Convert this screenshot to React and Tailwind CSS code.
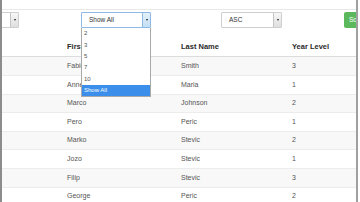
import React from 'react';

const rows = [
  { first: 'Fabio', last: 'Smith', year: 3 },
  { first: 'Anne', last: 'Maria', year: 1 },
  { first: 'Marco', last: 'Johnson', year: 2 },
  { first: 'Pero', last: 'Peric', year: 1 },
  { first: 'Marko', last: 'Stevic', year: 2 },
  { first: 'Jozo', last: 'Stevic', year: 1 },
  { first: 'Filip', last: 'Stevic', year: 3 },
  { first: 'George', last: 'Peric', year: 2 },
];

const options = ['2', '3', '5', '7', '10', 'Show All'];

const Arrow = ({ focused }) => (
  <div
    className={`w-[8px] h-full flex items-center justify-center border-l ${
      focused
        ? 'border-[#8db9e6] bg-gradient-to-b from-[#e4f1fb] to-[#c4dff4]'
        : 'border-[#c4c4c4] bg-gradient-to-b from-[#f7f7f7] to-[#dedede]'
    }`}
  >
    <div className="w-0 h-0 border-l-[1.5px] border-r-[1.5px] border-t-[2px] border-l-transparent border-r-transparent border-t-[#222]" />
  </div>
);

const Select = ({ label, width, focused, className = '' }) => (
  <div
    className={`h-[16px] flex items-stretch bg-white rounded-[1px] border ${
      focused ? 'border-[#8db9e6]' : 'border-[#cfcfcf]'
    } ${width} ${className}`}
  >
    <div className="flex-1 flex items-center pl-[7px] text-[6.5px] text-[#333]">{label}</div>
    <Arrow focused={focused} />
  </div>
);

export default function App() {
  return (
    <div className="w-[360px] h-[202px] bg-white overflow-hidden font-['Liberation_Sans',Arial,sans-serif]">
      <div className="relative w-[358px] h-full border-l-2 border-r-2 border-l-[#8c8c8c] border-r-[#a0a0a0] overflow-hidden">
        <div className="h-[10px] border-b border-[#e8e8e8]" />

        <div className="flex items-start h-[28px] pt-[2px]">
          <Select label="" width="w-[58px]" className="ml-[-41px] shrink-0" />
          <Select label="Show All" width="w-[70px]" focused className="ml-[62px] shrink-0" />
          <Select label="ASC" width="w-[61px]" className="ml-[70px] shrink-0" />
          <button className="ml-[62px] shrink-0 h-[16px] w-[40px] rounded-[2px] bg-[#5cb85c] text-white text-[6.5px] text-left pl-[5px]">
            Sort
          </button>
        </div>

        <div className="text-[7px]">
          <div className="grid grid-cols-[61px_114px_111px_1fr] h-[18.5px] items-center border-b border-[#dcdcdc] font-bold text-[7.5px] text-[#2a2a2a]">
            <div />
            <div className="pl-[4px]">First Name</div>
            <div className="pl-[4px]">Last Name</div>
            <div className="pl-[4px]">Year Level</div>
          </div>
          {rows.map((r, i) => (
            <div
              key={i}
              className={`grid grid-cols-[61px_114px_111px_1fr] h-[18.6px] items-center text-[#555] ${
                i > 0 ? 'border-t border-[#ececec]' : ''
              } ${i % 2 === 0 ? 'bg-[#f8f8f8]' : 'bg-white'}`}
            >
              <div />
              <div className="pl-[4px]">{r.first}</div>
              <div className="pl-[4px]">{r.last}</div>
              <div className="pl-[4px]">{r.year}</div>
            </div>
          ))}
        </div>

        <div className="absolute left-[79px] top-[28px] w-[70px] bg-white border border-t-0 border-[#a9a9a9]">
          {options.map((o) => (
            <div
              key={o}
              className={`h-[11.4px] flex items-center pl-[2px] text-[6px] ${
                o === 'Show All' ? 'bg-[#3b8eea] text-white' : 'text-[#555]'
              }`}
            >
              {o}
            </div>
          ))}
        </div>
      </div>
    </div>
  );
}
